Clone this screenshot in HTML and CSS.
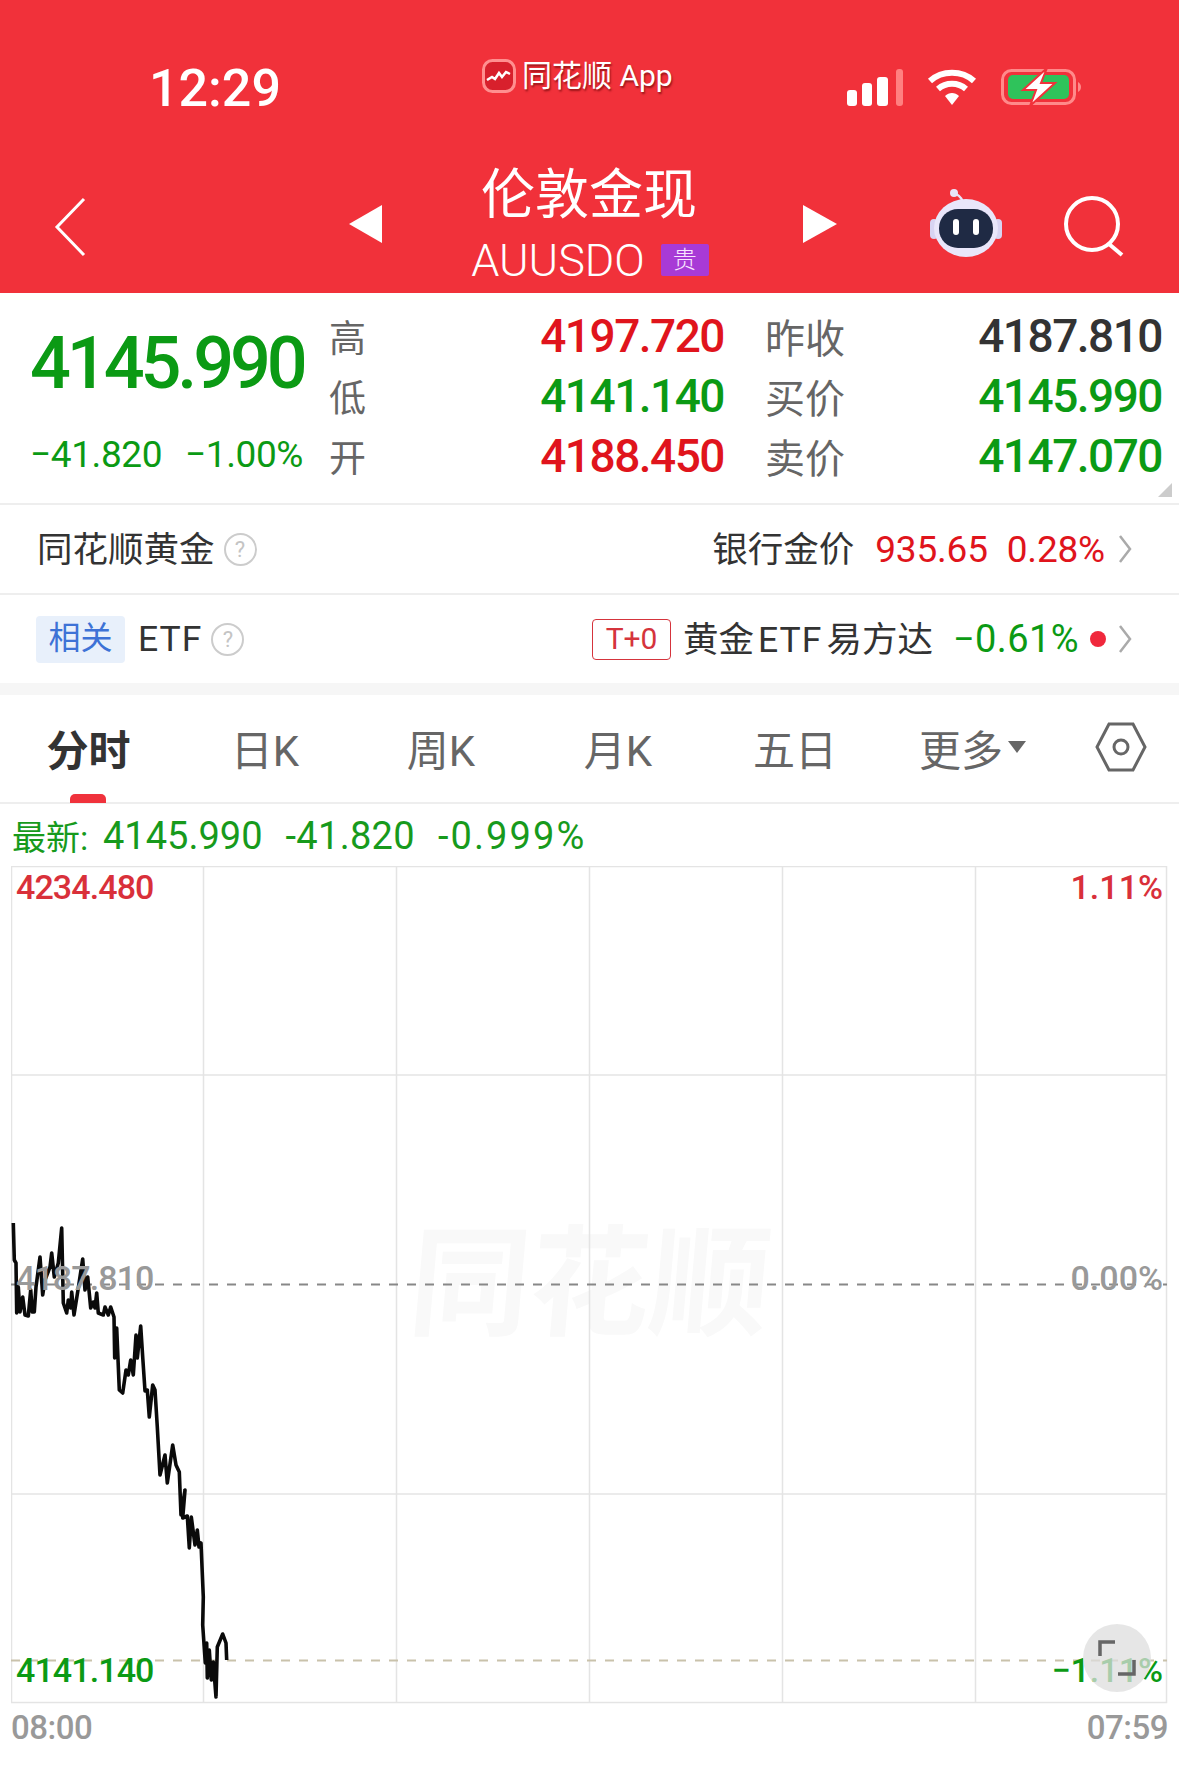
FILE: index.html
```html
<!DOCTYPE html>
<html lang="zh-CN">
<head>
    <meta charset="UTF-8">
    <title>伦敦金现</title>
    <link rel="stylesheet" href="styles.css">
</head>
<body>
    <header class="top">
        <div class="status">
            <span class="time">12:29</span>
            <span class="source">
                <svg class="source-logo" viewBox="0 0 34 34">
                    <rect x="1.5" y="1.5" width="31" height="31" rx="9" fill="#d8202c" stroke="#ff8f8f" stroke-width="3"/>
                    <path d="M5 21l5-3 3 2 4-6 3 4 4-5 4 2" fill="none" stroke="#fff" stroke-width="2.5"/>
                </svg>
                同花顺 App
            </span>
            <div class="status-icons">
                <div class="signal">
                    <i class="bar1"></i><i class="bar2"></i><i class="bar3"></i><i class="bar4"></i>
                </div>
                <svg class="wifi" viewBox="0 0 50 38">
                    <path d="M3 13C15 2 35 2 47 13" fill="none" stroke="#fff" stroke-width="6"/>
                    <path d="M11 21C19 14 31 14 39 21" fill="none" stroke="#fff" stroke-width="6"/>
                    <path d="M18 28L25 37L32 28C28 24 22 24 18 28Z" fill="#fff"/>
                </svg>
                <svg class="battery" viewBox="0 0 80 38">
                    <rect x="1.5" y="2.5" width="72" height="33" rx="9" fill="none" stroke="#ff8a8a" stroke-width="3"/>
                    <rect x="7" y="7" width="61" height="24" rx="5" fill="#2fc35b"/>
                    <path d="M77 14c2 1 3 3 3 5s-1 4-3 5z" fill="#ff8a8a"/>
                    <path d="M46 0L22 22H35L29 38L54 15H40Z" fill="#fff" stroke="#f1313a" stroke-width="2"/>
                </svg>
            </div>
        </div>
        <nav class="nav">
            <svg class="back" viewBox="0 0 32 60">
                <polyline points="30,2 3,30 30,58" fill="none" stroke="#fff" stroke-width="3"/>
            </svg>
            <div class="arrow arrow-left"></div>
            <div class="title-box">
                <div class="title">伦敦金现</div>
                <div class="subtitle">AUUSDO<span class="badge">贵</span></div>
            </div>
            <div class="arrow arrow-right"></div>
            <svg class="robot" viewBox="0 0 74 70">
                <path d="M34 16C34 10 31 7 27 5" fill="none" stroke="#e8e4f8" stroke-width="2.5"/>
                <circle cx="25" cy="4" r="4" fill="#e8e4f8"/>
                <rect x="1" y="30" width="8" height="20" rx="4" fill="#d8d4f2"/>
                <rect x="65" y="30" width="8" height="20" rx="4" fill="#d8d4f2"/>
                <ellipse cx="37" cy="39" rx="32" ry="29" fill="#e9e6fa"/>
                <rect x="10" y="20" width="54" height="39" rx="19" fill="#1f2a44"/>
                <rect x="24" y="30" width="6" height="16" rx="3" fill="#fff"/>
                <rect x="44" y="30" width="6" height="16" rx="3" fill="#fff"/>
            </svg>
            <svg class="search" viewBox="0 0 62 62">
                <circle cx="29" cy="29" r="26" fill="none" stroke="#fff" stroke-width="4"/>
                <line x1="46" y1="49" x2="59" y2="60" stroke="#fff" stroke-width="4"/>
            </svg>
        </nav>
    </header>

    <section class="quote">
        <div class="quote-main">
            <div class="price">4145.990</div>
            <div class="change"><span>−41.820</span><span>−1.00%</span></div>
        </div>
        <div class="quote-table">
            <span class="q-label">高</span><span class="q-val red">4197.720</span>
            <span class="q-label wide">昨收</span><span class="q-val dark">4187.810</span>
            <span class="q-label">低</span><span class="q-val green">4141.140</span>
            <span class="q-label wide">买价</span><span class="q-val green">4145.990</span>
            <span class="q-label">开</span><span class="q-val red">4188.450</span>
            <span class="q-label wide">卖价</span><span class="q-val green">4147.070</span>
        </div>
        <i class="corner"></i>
    </section>

    <div class="info-row">
        <div class="info-left"><span class="cjk">同花顺黄金</span><span class="help">?</span></div>
        <div class="info-right">
            <span class="cjk">银行金价</span>
            <span class="num red gap-bank">935.65</span>
            <span class="num red gap-pct">0.28%</span>
            <svg class="chev" viewBox="0 0 14 30"><polyline points="2,2 12,15 2,28" fill="none" stroke="#aaa" stroke-width="2.5"/></svg>
        </div>
    </div>
    <div class="info-row last">
        <div class="info-left"><span class="tag">相关</span><span class="etf">ETF</span><span class="help">?</span></div>
        <div class="info-right">
            <span class="t0">T+0</span>
            <span class="fund cjk">黄金<span class="num-plain">ETF</span>易方达</span>
            <span class="num num-wide green gap-fund">−0.61%</span>
            <i class="dot"></i>
            <svg class="chev" viewBox="0 0 14 30"><polyline points="2,2 12,15 2,28" fill="none" stroke="#aaa" stroke-width="2.5"/></svg>
        </div>
    </div>
    <div class="band"></div>

    <div class="tabs">
        <div class="tab active">分时</div>
        <div class="tab">日K</div>
        <div class="tab">周K</div>
        <div class="tab">月K</div>
        <div class="tab">五日</div>
        <div class="tab">更多<i class="caret"></i></div>
        <div class="tab">
            <svg class="hex" viewBox="0 0 52 50">
                <polygon points="14,2 38,2 50,25 38,48 14,48 2,25" fill="none" stroke="#666" stroke-width="3"/>
                <circle cx="26" cy="25" r="7" fill="none" stroke="#666" stroke-width="3"/>
            </svg>
        </div>
    </div>

    <div class="latest">
        <span class="latest-name">最新:</span>
        <span>4145.990</span>
        <span class="latest-chg">-41.820</span>
        <span class="latest-pct">-0.999%</span>
    </div>

    <div class="chart">
        <div class="watermark">同花顺</div>
        <svg class="chart-svg" viewBox="11 866 1157 838">
            <g stroke="#e4e4e4" stroke-width="1.5">
                <rect x="11.5" y="866.5" width="1155" height="836" fill="none"/>
                <line x1="203.5" y1="866" x2="203.5" y2="1703"/>
                <line x1="396.5" y1="866" x2="396.5" y2="1703"/>
                <line x1="589.5" y1="866" x2="589.5" y2="1703"/>
                <line x1="782.5" y1="866" x2="782.5" y2="1703"/>
                <line x1="975.5" y1="866" x2="975.5" y2="1703"/>
                <line x1="11" y1="1075" x2="1167" y2="1075"/>
                <line x1="11" y1="1494" x2="1167" y2="1494"/>
            </g>
            <line x1="11" y1="1284.5" x2="1167" y2="1284.5" stroke="#888" stroke-width="2" stroke-dasharray="9 9"/>
            <line x1="11" y1="1660.5" x2="1167" y2="1660.5" stroke="#c9c2ab" stroke-width="2" stroke-dasharray="9 9"/>
            <polyline fill="none" stroke="#0a0a0a" stroke-width="3.6" stroke-linejoin="round" points="13.3,1223 14.3,1260 16,1263 16.7,1313 18.3,1287 20,1312 22.7,1297 25,1315 28.3,1316 30.7,1290 32.3,1312 34.3,1312 36,1287 40,1257 42.7,1295 45,1280 50,1267 51.7,1253 54.3,1277 58.3,1263 61.7,1228 63.3,1303 66.7,1313 68.3,1300 70.7,1308 71.7,1292 74,1315 78.3,1288 82.7,1259 85,1290 87.7,1277 90.7,1308 93.3,1302 95,1308 96.7,1293 98.3,1313 103.3,1315 105,1307 108.3,1315 110.7,1307 114,1317 114.7,1358 116.7,1328 119.3,1390 122.7,1393 126,1370 128.3,1375 130.7,1360 133.3,1375 136,1335 137.3,1358 140.7,1326 142.7,1357 145,1391 147.3,1390 149.3,1417 152.7,1385 155,1390 157.3,1427 160,1475 165,1455 167.3,1483 172.7,1445 176,1465 179.3,1472 181,1515 185,1490 182.7,1518 187.3,1516 189.3,1548 191.3,1517 195,1545 197.3,1530 199,1547 201,1543 203.3,1597 202.7,1625 205.3,1663 206.7,1643 207.3,1678 209.3,1650 211.3,1680 213.3,1662 216,1697 217.3,1647 222.7,1634 226,1643 226.7,1660"/>
        </svg>
        <span class="axis axis-left red-soft axis-top">4234.480</span>
        <span class="axis axis-right axis-wide red-soft axis-top">1.11%</span>
        <span class="axis axis-left grey axis-mid">4187.810</span>
        <span class="axis axis-right axis-wide grey axis-mid">0.00%</span>
        <span class="axis axis-left green axis-low">4141.140</span>
        <span class="axis axis-right axis-wide green axis-low">−1.11%</span>
        <div class="expand">
            <svg viewBox="0 0 68 68">
                <polyline points="17,32 17,18 32,18" fill="none" stroke="#666" stroke-width="3.5"/>
                <polyline points="35,50 51,50 51,36" fill="none" stroke="#666" stroke-width="3.5"/>
            </svg>
        </div>
    </div>

    <div class="times"><span>08:00</span><span>07:59</span></div>
</body>
</html>
```

FILE: styles.css
```css
* {
    box-sizing: border-box;
}

body {
    margin: 0;
    width: 1179px;
    height: 1766px;
    overflow: hidden;
    background: #fff;
    color: #333;
    font-family: Roboto, "Noto Sans CJK SC", sans-serif;
}

/* header */
.top {
    height: 293px;
    background: #f1313a;
    color: #fff;
}

.status {
    height: 150px;
    display: flex;
    align-items: flex-start;
    padding-left: 149px;
}

.time {
    width: 132px;
    margin-top: 59px;
    font-size: 52px;
    line-height: 60px;
    font-weight: 500;
}

.source {
    display: flex;
    align-items: center;
    gap: 6px;
    margin-top: 56px;
    margin-left: 201px;
    font-size: 30px;
    line-height: 40px;
    text-shadow: 1px 2px 2px rgba(90, 0, 0, 0.6);
}

.source-logo {
    width: 34px;
    height: 34px;
}

.status-icons {
    display: flex;
    align-items: flex-end;
    margin-top: 68px;
    margin-left: 174px;
}

.signal {
    display: flex;
    align-items: flex-end;
    gap: 5px;
    height: 38px;
}

.signal i {
    display: block;
    width: 10px;
    background: #fff;
    border-radius: 3px;
}

.signal .bar1 { height: 16px; }
.signal .bar2 { height: 23px; }
.signal .bar3 { height: 29px; width: 11px; }
.signal .bar4 { height: 37px; width: 7px; margin-left: 3px; background: #ff8080; }

.wifi {
    width: 50px;
    height: 38px;
    margin-left: 24px;
}

.battery {
    width: 80px;
    height: 38px;
    margin-left: 24px;
}

.nav {
    height: 143px;
    display: grid;
    grid-template-columns: 349px 33px 420px 34px 227px 1fr;
    align-items: start;
}

.back {
    width: 32px;
    height: 60px;
    margin: 47px 0 0 54px;
}

.arrow {
    width: 0;
    height: 0;
    margin-top: 55px;
    border-top: 19px solid transparent;
    border-bottom: 19px solid transparent;
}

.arrow-left {
    border-right: 33px solid #fff;
}

.arrow-right {
    margin-left: 1px;
    border-left: 34px solid #fff;
}

.title-box {
    padding-right: 4px;
    text-align: center;
}

.title {
    font-size: 54px;
    line-height: 60px;
    margin-top: 16px;
    padding-right: 2px;
}

.subtitle {
    display: flex;
    justify-content: center;
    align-items: center;
    gap: 16px;
    height: 48px;
    margin-top: 10px;
    font-size: 45px;
    font-weight: 300;
}

.badge {
    width: 48px;
    height: 32px;
    background: #a83ad6;
    color: #f8e4ff;
    font-size: 24px;
    line-height: 32px;
    text-align: center;
    border-radius: 2px;
}

.robot {
    width: 74px;
    height: 70px;
    margin: 39px 0 0 93px;
}

.search {
    width: 62px;
    height: 62px;
    margin-top: 45px;
}

/* quote */
.quote {
    height: 212px;
    display: flex;
    border-bottom: 2px solid #eee;
    position: relative;
}

.quote-main {
    width: 329px;
    padding-left: 30px;
}

.price {
    margin-top: 29px;
    font-size: 72px;
    line-height: 84px;
    font-weight: 500;
    letter-spacing: -4.1px;
    color: #0b9a14;
}

.change {
    display: flex;
    justify-content: space-between;
    width: 273px;
    margin-top: 27px;
    font-size: 37px;
    line-height: 44px;
    letter-spacing: -0.4px;
    color: #0b9a14;
}

.quote-table {
    display: grid;
    grid-template-columns: 60px 335px 121px 317px;
    grid-auto-rows: 60px;
    padding-top: 13px;
    align-items: center;
}

.q-label {
    padding-top: 8px;
    font-size: 37px;
    line-height: 60px;
    color: #666;
}

.q-label.wide {
    padding-left: 41px;
    font-size: 40px;
}

.q-val {
    text-align: right;
    font-size: 46px;
    line-height: 52px;
    font-weight: 500;
    letter-spacing: -1.5px;
}

.red { color: #e0141c; }
.green { color: #0b9a14; }
.dark { color: #333; }

.corner {
    position: absolute;
    right: 7px;
    bottom: 6px;
    width: 0;
    height: 0;
    border-left: 14px solid transparent;
    border-bottom: 14px solid #ccc;
}

/* info rows */
.info-row {
    height: 90px;
    display: flex;
    justify-content: space-between;
    align-items: center;
    padding: 0 47px 0 37px;
    border-bottom: 2px solid #eee;
    font-size: 35.5px;
}

.info-row.last {
    height: 88px;
    border-bottom: 0;
    padding-left: 36px;
}

.info-left,
.info-right {
    display: flex;
    align-items: center;
}

.cjk {
    padding-bottom: 5px;
}

.help {
    width: 33px;
    height: 33px;
    margin-left: 9px;
    border: 2px solid #ccc;
    border-radius: 50%;
    color: #c4c4c4;
    font-size: 22px;
    line-height: 29px;
    text-align: center;
}

.tag {
    width: 89px;
    height: 47px;
    background: #e8f0fb;
    color: #3d72d6;
    font-size: 32px;
    line-height: 44px;
    text-align: center;
    border-radius: 4px;
}

.etf {
    margin-left: 13px;
    letter-spacing: 1px;
}

.num {
    font-size: 37px;
    letter-spacing: -0.2px;
}

.num-wide {
    font-size: 38px;
    letter-spacing: 0.4px;
}

.gap-bank {
    margin-left: 21px;
}

.gap-pct {
    margin-left: 19px;
}

.chev {
    width: 14px;
    height: 30px;
    margin-left: 13px;
}

.t0 {
    width: 79px;
    height: 41px;
    border: 1.5px solid #d5343c;
    border-radius: 4px;
    color: #d5343c;
    font-size: 30px;
    line-height: 38px;
    text-align: center;
}

.fund {
    margin-left: 12px;
}

.num-plain {
    margin: 0 4px;
    letter-spacing: 1px;
}

.gap-fund {
    margin-left: 20px;
}

.dot {
    width: 16px;
    height: 16px;
    margin-left: 11px;
    margin-right: -1px;
    border-radius: 50%;
    background: #f0283c;
}

.band {
    height: 12px;
    background: #f6f6f6;
}

/* tabs */
.tabs {
    height: 109px;
    display: grid;
    grid-template-columns: 177px 176px 176px 178px 176px 179px 1fr;
    align-items: center;
    border-bottom: 2px solid #eee;
    color: #666;
}

.tab {
    display: flex;
    justify-content: center;
    align-items: center;
    height: 107px;
    padding-bottom: 3px;
    font-size: 42px;
    position: relative;
}

.tab.active {
    color: #333;
    font-weight: 700;
}

.tab.active::after {
    content: "";
    position: absolute;
    left: 70px;
    bottom: -1px;
    width: 36px;
    height: 9px;
    border-radius: 5px 5px 0 0;
    background: #f0323c;
}

.caret {
    width: 0;
    height: 0;
    margin-left: 5px;
    border-left: 9px solid transparent;
    border-right: 9px solid transparent;
    border-top: 12px solid #666;
}

.hex {
    width: 52px;
    height: 50px;
}

/* chart */
.latest {
    height: 62px;
    display: flex;
    align-items: center;
    gap: 23px;
    padding: 1px 0 0 12px;
    font-size: 38px;
    color: #179a1c;
}

.latest-name {
    width: 68px;
    font-size: 34px;
    white-space: nowrap;
}

.latest-chg {
    letter-spacing: 0.3px;
}

.latest-pct {
    letter-spacing: 2.1px;
}

.chart {
    width: 1157px;
    height: 838px;
    margin-left: 11px;
    position: relative;
}

.chart-svg {
    display: block;
    width: 1157px;
    height: 838px;
    position: relative;
}

.watermark {
    position: absolute;
    left: 399px;
    top: 354px;
    font-size: 120px;
    line-height: 130px;
    font-weight: 700;
    color: #f9f9f9;
    white-space: nowrap;
    transform: skewX(-5deg);
}

.axis {
    position: absolute;
    font-size: 34px;
    line-height: 40px;
    font-weight: 500;
    letter-spacing: -0.9px;
}

.axis-left { left: 5px; }
.axis-right { right: 5px; }
.axis-wide { letter-spacing: 0; }
.axis-top { top: 1px; }
.axis-mid { top: 392px; }
.axis-low { top: 784px; }

.red-soft { color: #d9303a; }
.grey { color: #999; }

.expand {
    position: absolute;
    left: 1072px;
    top: 758px;
    width: 68px;
    height: 68px;
    border-radius: 50%;
    background: rgba(222, 222, 222, 0.75);
}

.expand svg {
    display: block;
}

.times {
    display: flex;
    justify-content: space-between;
    width: 1168px;
    padding-left: 11px;
    margin-top: 3px;
    font-size: 33px;
    line-height: 42px;
    font-weight: 500;
    letter-spacing: -0.5px;
    color: #999;
}
```
